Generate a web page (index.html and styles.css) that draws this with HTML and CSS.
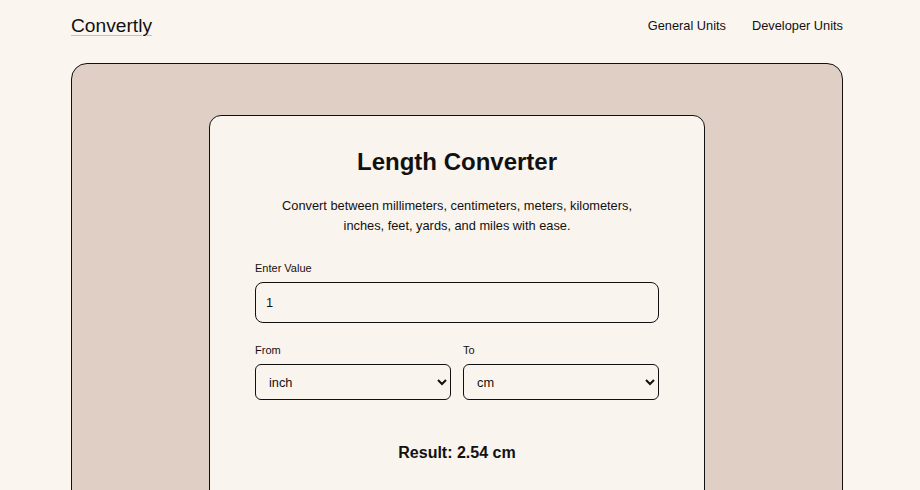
FILE: index.html
```html
<!DOCTYPE html>
<html lang="en">
<head>
<meta charset="utf-8">
<title>Convertly - Length Converter</title>
<link rel="stylesheet" href="styles.css">
</head>
<body>
<div class="page">
  <header class="site-header">
    <a class="logo" href="#">Convertly</a>
    <nav class="nav">
      <a href="#">General Units</a>
      <a href="#">Developer Units</a>
    </nav>
  </header>
  <main class="panel">
    <section class="card">
      <h1 class="title">Length Converter</h1>
      <p class="desc">Convert between millimeters, centimeters, meters, kilometers, inches, feet, yards, and miles with ease.</p>
      <div class="field">
        <label class="label" for="value">Enter Value</label>
        <input class="input" id="value" type="text" value="1">
      </div>
      <div class="row">
        <div class="field">
          <label class="label" for="from">From</label>
          <select class="select" id="from">
            <option>mm</option>
            <option>cm</option>
            <option>m</option>
            <option>km</option>
            <option selected>inch</option>
            <option>feet</option>
            <option>yard</option>
            <option>mile</option>
          </select>
        </div>
        <div class="field">
          <label class="label" for="to">To</label>
          <select class="select" id="to">
            <option>mm</option>
            <option selected>cm</option>
            <option>m</option>
            <option>km</option>
            <option>inch</option>
            <option>feet</option>
            <option>yard</option>
            <option>mile</option>
          </select>
        </div>
      </div>
      <p class="result">Result: 2.54 cm</p>
    </section>
  </main>
</div>
</body>
</html>
```
FILE: styles.css
```css
* { box-sizing: border-box; }
html, body { margin: 0; padding: 0; }
body {
  background: #fbf5ef;
  color: #111;
  font-family: "Liberation Sans", Arial, sans-serif;
}
.page {
  width: 772px;
  margin-left: 71px;
}
.site-header {
  display: flex;
  justify-content: space-between;
  align-items: center;
  height: 51px;
}
.logo {
  font-size: 19.2px;
  color: #111;
  text-decoration: underline;
  text-decoration-color: #e0b4bb;
  text-decoration-thickness: 1px;
  text-underline-offset: 3px;
}
.nav {
  display: flex;
  gap: 26px;
}
.nav a {
  font-size: 12.8px;
  color: #111;
  text-decoration: none;
}
.panel {
  margin-top: 12px;
  background: #dfcfc4;
  border: 1px solid #111;
  border-radius: 16px;
  padding: 51px 0 40px;
  display: flex;
  justify-content: center;
  min-height: 520px;
}
.card {
  width: 496px;
  background: #faf4ee;
  border: 1px solid #111;
  border-radius: 12px;
  padding: 31px 45px 40px;
  align-self: flex-start;
}
.title {
  margin: 0;
  font-size: 24px;
  line-height: 30px;
  font-weight: bold;
  text-align: center;
  color: #111;
}
.desc {
  margin: 19px auto 0;
  max-width: 370px;
  font-size: 12.8px;
  line-height: 20px;
  text-align: center;
}
.field {
  display: flex;
  flex-direction: column;
  gap: 7px;
}
.desc + .field { margin-top: 25px; }
.label {
  font-size: 11px;
  line-height: 14px;
}
.input {
  height: 41px;
  border: 1px solid #111;
  border-radius: 8px;
  background: #faf4ee;
  padding: 0 10px;
  font-family: inherit;
  font-size: 12.8px;
  color: #111;
}
.row {
  margin-top: 20px;
  display: grid;
  grid-template-columns: 1fr 1fr;
  gap: 12px;
}
.select {
  height: 36px;
  border: 1px solid #111;
  border-radius: 6px;
  background: #faf4ee;
  padding: 0 6px 0 9px;
  font-family: inherit;
  font-size: 12.8px;
  color: #111;
}
.result {
  margin: 43px 0 0;
  font-size: 16px;
  line-height: 20px;
  font-weight: bold;
  text-align: center;
}
```
